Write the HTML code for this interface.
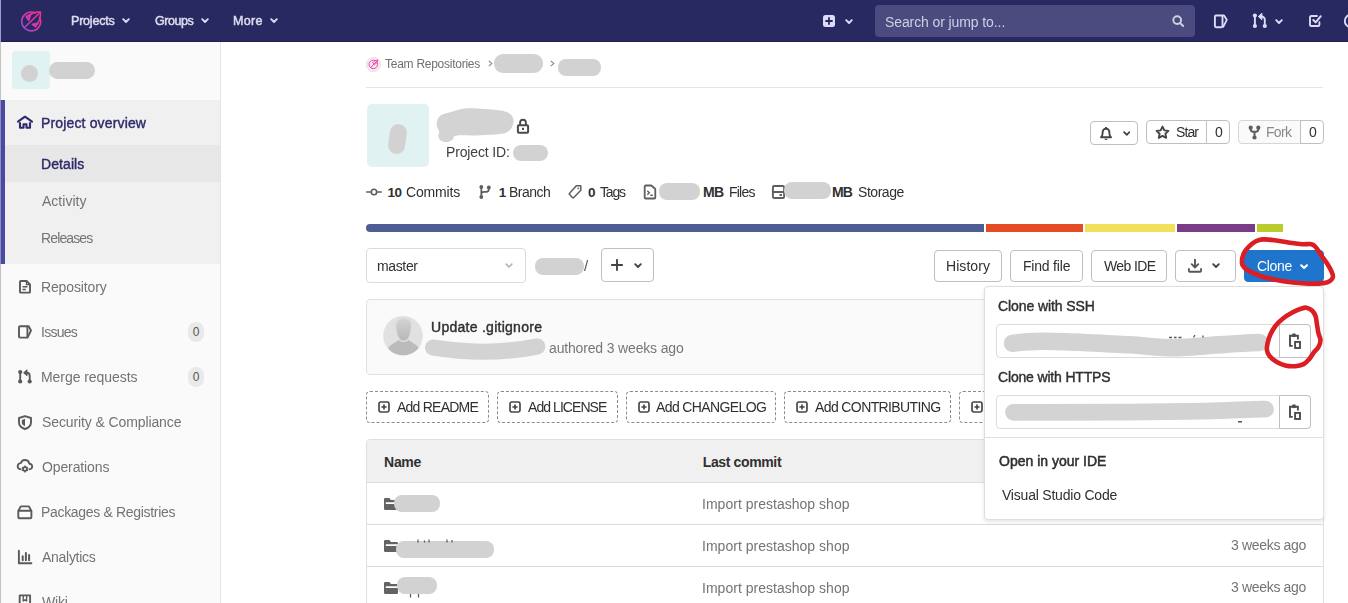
<!DOCTYPE html>
<html>
<head>
<meta charset="utf-8">
<title>Project</title>
<style>
*{box-sizing:border-box;margin:0;padding:0}
html,body{width:1348px;height:603px;overflow:hidden;background:#fff}
body{font-family:"Liberation Sans",sans-serif;font-size:14px;color:#303030;position:relative}
.abs{position:absolute}
.t{position:absolute;white-space:nowrap;line-height:20px;height:20px;will-change:transform}
.b{font-weight:400;-webkit-text-stroke:.42px currentColor}
.b7{font-weight:700;will-change:auto}
.bb{font-weight:700 !important;font-size:13.500px;-webkit-text-stroke:0 !important;will-change:auto}
.blob{position:absolute;background:#d2d2d2;border-radius:10px}
/* nav */
#nav{position:absolute;left:0;top:0;width:1348px;height:41px;background:#292961}
#nav .t{color:#dddcf0;font-weight:400;font-size:12.5px;-webkit-text-stroke:.5px #dddcf0}
#search{position:absolute;left:875px;top:5px;width:320px;height:32px;background:#4b4b80;border-radius:4px}
#search .t{font-weight:400;color:#cfcfe3;font-size:14px;-webkit-text-stroke:0}
/* sidebar */
#side{position:absolute;left:0;top:41px;width:221px;height:562px;background:#fafafa;border-right:1px solid #e5e5e5}
#side .t{color:#737373;font-size:14px}
.badge{position:absolute;left:188px;width:16px;height:20px;border-radius:8px;background:#e9e9e9;color:#555;font-size:12px;line-height:20px;text-align:center}
/* main */
.btn{position:absolute;height:34px;border:1px solid #d4d4d4;border-radius:4px;background:#fff}
.btn .t{top:6px;font-size:14px;color:#303030}
.hr{position:absolute;height:1px;background:#e5e5e5}
.dash{position:absolute;top:391px;height:32px;border:1px dashed #8c8c8c;border-radius:4px;background:#fff}
.dash .t{top:5px;left:29px;font-size:14px;color:#303030}
.dash svg{position:absolute;left:11px;top:9px;width:12px;height:12px}
.row .t{font-size:14px;color:#747474}
</style>
<style id="fit">
#n1{left:70.6px;top:11px;letter-spacing:-0.20px}
#n2{left:154.7px;top:11px;letter-spacing:-0.47px}
#n3{left:232.7px;top:11px;letter-spacing:0.32px}
#n4{left:9.6px;top:7px;letter-spacing:-0.10px}
#s0{left:40.7px;top:72px;letter-spacing:0.15px}
#s1{left:41.0px;top:113px;letter-spacing:0.08px}
#s2{left:41.5px;top:150px;letter-spacing:0.01px}
#s3{left:40.8px;top:187px;letter-spacing:-0.87px}
#s4{left:40.8px;top:236px;letter-spacing:-0.14px}
#s5{left:40.7px;top:281px;letter-spacing:-0.73px}
#s6{left:40.7px;top:326px;letter-spacing:-0.06px}
#s7{left:41.7px;top:371px;letter-spacing:-0.11px}
#s8{left:41.7px;top:416px;letter-spacing:-0.12px}
#s9{left:40.7px;top:461px;letter-spacing:-0.32px}
#s10{left:41.7px;top:506px;letter-spacing:-0.28px}
#s11{left:41.7px;top:551px;letter-spacing:-0.21px}
#m0{left:385.4px;top:54px;letter-spacing:-0.26px}
#m1{left:445.7px;top:142px;letter-spacing:-0.15px}
#m2{left:28.9px;top:1px;letter-spacing:-0.90px}
#m3{left:7.7px;top:1px;letter-spacing:0.00px}
#m4{left:27.3px;top:1px;letter-spacing:-0.70px}
#m5{left:7.9px;top:1px;letter-spacing:0.00px}
#m6{left:387.6px;top:183px;letter-spacing:-0.61px}
#m7{left:406.1px;top:182px;letter-spacing:-0.17px}
#m8{left:498.8px;top:183px;letter-spacing:0.00px}
#m9{left:509.0px;top:182px;letter-spacing:-0.49px}
#m10{left:587.9px;top:183px;letter-spacing:0.00px}
#m11{left:599.9px;top:182px;letter-spacing:-1.19px}
#m12{left:703.1px;top:182px;letter-spacing:-0.86px}
#m13{left:728.5px;top:182px;letter-spacing:-0.79px}
#m14{left:831.9px;top:182px;letter-spacing:-0.86px}
#m15{left:857.9px;top:182px;letter-spacing:-0.46px}
#m16{left:10.3px;top:7px;letter-spacing:-0.36px}
#m17{left:583.6px;top:256px;letter-spacing:0.00px}
#m18{left:11.1px;top:5px;letter-spacing:0.06px}
#m19{left:11.8px;top:5px;letter-spacing:-0.20px}
#m20{left:11.5px;top:5px;letter-spacing:-0.60px}
#m21{left:11.6px;top:5px;letter-spacing:-0.32px}
#m22{left:430.9px;top:317px;letter-spacing:0.27px}
#m23{left:549.2px;top:338px;letter-spacing:-0.16px}
#m24{left:30.1px;top:5px;letter-spacing:-0.77px}
#m25{left:30.2px;top:5px;letter-spacing:-0.94px}
#m26{left:29.3px;top:5px;letter-spacing:-0.61px}
#m27{left:30.4px;top:5px;letter-spacing:-0.61px}
#m28{left:384.1px;top:452px;letter-spacing:-0.31px}
#m29{left:702.7px;top:452px;letter-spacing:-0.36px}
#m30{left:701.7px;top:494px;letter-spacing:0.02px}
#m31{left:701.7px;top:536px;letter-spacing:0.02px}
#m32{left:701.7px;top:578px;letter-spacing:0.02px}
#m33{left:1230.9px;top:535px;letter-spacing:-0.33px}
#m34{left:1230.9px;top:577px;letter-spacing:-0.33px}
#d0{left:997.7px;top:296px;letter-spacing:-0.09px}
#d1{left:997.7px;top:367px;letter-spacing:-0.17px}
#d2{left:998.5px;top:451px;letter-spacing:0.00px}
#d3{left:1002.1px;top:485px;letter-spacing:-0.21px}
</style>
</head>
<body>

<!-- ================= NAV ================= -->
<div id="nav">
  <svg class="abs" style="left:18px;top:8px" width="26" height="26" viewBox="18 8 26 26" fill="none" stroke-linecap="round" stroke-linejoin="round">
    <defs><linearGradient id="lg" gradientUnits="userSpaceOnUse" x1="22" y1="30" x2="40" y2="12"><stop offset="0" stop-color="#8f4fe0"/><stop offset=".45" stop-color="#d63aa8"/><stop offset="1" stop-color="#f0308c"/></linearGradient></defs>
    <path d="M39.600 17.300A9.400 9.400 0 1 1 35.200 13" stroke="url(#lg)" stroke-width="1.600"/>
    <path d="M24.700 27.300 40.300 12.200" stroke="url(#lg)" stroke-width="1.500"/>
    <path d="M40.400 12.100c-4.200-.4-8 .6-10.600 2.800M40.400 12.100c.4 4.200-.7 8.400-3.200 11.700" stroke="url(#lg)" stroke-width="1.500"/>
    <path d="M30.600 14.400 26.300 16.500 28.600 20.200z" stroke="url(#lg)" stroke-width="1.700" fill="url(#lg)" fill-opacity=".55"/>
    <path d="M37.600 23.400 35.600 26.600 32.400 24.300z" stroke="url(#lg)" stroke-width="1.700" fill="url(#lg)" fill-opacity=".55"/>
  </svg>
  <span class="t" id="n1">Projects</span>
  <span class="t" id="n2">Groups</span>
  <span class="t" id="n3">More</span>
  <svg class="abs" style="left:122.2px;top:18px" width="8" height="5.4" viewBox="0 0 8 5.400"><path d="M1.200 1.200 4 4 6.800 1.200" fill="none" stroke="#dddbf6" stroke-width="1.9" stroke-linecap="round" stroke-linejoin="round"/></svg>
  <svg class="abs" style="left:201.4px;top:18px" width="8" height="5.4" viewBox="0 0 8 5.400"><path d="M1.200 1.200 4 4 6.800 1.200" fill="none" stroke="#dddbf6" stroke-width="1.9" stroke-linecap="round" stroke-linejoin="round"/></svg>
  <svg class="abs" style="left:270.1px;top:18px" width="8" height="5.4" viewBox="0 0 8 5.400"><path d="M1.200 1.200 4 4 6.800 1.200" fill="none" stroke="#dddbf6" stroke-width="1.9" stroke-linecap="round" stroke-linejoin="round"/></svg>

  <!-- plus -->
  <svg class="abs" style="left:822px;top:14px" width="14" height="14" viewBox="0 0 14 14"><rect x="1" y="1" width="12" height="12" rx="2.5" fill="#dddbf6"/><path d="M7 4v6M4 7h6" stroke="#292961" stroke-width="1.8" stroke-linecap="round"/></svg>
  <svg class="abs" style="left:845.2px;top:18.6px" width="8" height="5.4" viewBox="0 0 8 5.400"><path d="M1.200 1.200 4 4 6.800 1.200" fill="none" stroke="#dddbf6" stroke-width="1.9" stroke-linecap="round" stroke-linejoin="round"/></svg>

  <div id="search">
    <span class="t" id="n4">Search or jump to...</span>
    <svg class="abs" style="left:296px;top:9px" width="14" height="14" viewBox="0 0 14 14"><circle cx="6.200" cy="6.100" r="3.900" fill="none" stroke="#cfcfe3" stroke-width="1.900"/><path d="M9.300 9.200l2.800 2.800" stroke="#cfcfe3" stroke-width="2" stroke-linecap="round"/></svg>
  </div>

  <!-- issues -->
  <svg class="abs" style="left:1212px;top:13px" width="18" height="17" viewBox="1212 13 18 17" fill="none" stroke="#dddbf6" stroke-linejoin="round"><rect x="1214.900" y="15.500" width="7.600" height="11.700" rx="1.200" stroke-width="1.900"/><path d="M1222.500 15.500h1.500l2.800 4.300-3.600 7.100" stroke-width="1.800" stroke-linecap="round"/></svg>
  <!-- merge -->
  <svg class="abs" style="left:1251px;top:11px" width="18" height="19" viewBox="1251 11 18 19" fill="none" stroke="#dddbf6"><circle cx="1254.900" cy="15.600" r="2.100" fill="#dddbf6" stroke="none"/><circle cx="1254.900" cy="26" r="2.100" fill="#dddbf6" stroke="none"/><path d="M1254.900 16v10" stroke-width="1.900"/><circle cx="1264.800" cy="26" r="2.100" fill="#dddbf6" stroke="none"/><path d="M1264.800 26v-6.300a3.200 3.200 0 0 0-3.200-3.200h-1.600" stroke-width="1.900"/><path d="M1261.900 13.200 1258.300 16.500 1261.900 19.800z" fill="#dddbf6" stroke-width="1" stroke-linejoin="round"/></svg>
  <svg class="abs" style="left:1275.2px;top:18.6px" width="8" height="5.4" viewBox="0 0 8 5.400"><path d="M1.200 1.200 4 4 6.800 1.200" fill="none" stroke="#dddbf6" stroke-width="1.9" stroke-linecap="round" stroke-linejoin="round"/></svg>
  <!-- todo -->
  <svg class="abs" style="left:1308px;top:12px" width="16" height="17" viewBox="1308 12 16 17" fill="none" stroke="#dddbf6" stroke-linecap="round" stroke-linejoin="round"><path d="M1319.400 22.200v2.500a1.300 1.300 0 0 1-1.300 1.300h-6.800a1.300 1.300 0 0 1-1.300-1.300v-7.400a1.300 1.300 0 0 1 1.300-1.300h5.600" stroke-width="1.900"/><path d="M1313.300 20 1315.700 22.400 1320.800 16.200" stroke-width="2"/></svg>
  <!-- help (cut) -->
  <svg class="abs" style="left:1343px;top:13px" width="16" height="16" viewBox="0 0 16 16"><circle cx="8" cy="8" r="6.200" fill="none" stroke="#dddbf6" stroke-width="1.9"/></svg>
</div>
<div class="abs" style="left:0;top:41px;width:1348px;height:1px;background:#202050;z-index:5"></div>
<div class="abs" style="left:0;top:0;width:1px;height:603px;background:#c4c4c4;z-index:6"></div><div class="abs" style="left:0;top:0;width:1px;height:42px;background:#9e9dc9;z-index:7"></div><div class="abs" style="left:0;top:100px;width:1px;height:164px;background:#8f8dc4;z-index:7"></div>

<!-- ================= SIDEBAR ================= -->
<div id="side">
  <div class="abs" style="left:12px;top:10px;width:38px;height:38px;border-radius:4px;background:#e0f2f1"></div>
  <div class="blob" style="left:20.800px;top:23.600px;width:17.200px;height:17.600px;border-radius:9px"></div>
  <div class="blob" style="left:49.300px;top:21px;width:45.600px;height:17.400px"></div>

  <div class="abs" style="left:0;top:59px;width:220px;height:164px;background:#f0f0f0"></div>
  <div class="abs" style="left:1px;top:59px;width:4px;height:164px;background:#4b48a0"></div>
  <div class="abs" style="left:5px;top:104px;width:215px;height:37px;background:#e7e7e7"></div>
  <span class="t b" id="s0" style="color:#2f2a6b">Project overview</span>
  <span class="t b" id="s1" style="color:#2f2a6b">Details</span>
  <span class="t" id="s2">Activity</span>
  <span class="t" id="s3">Releases</span>

  <span class="t" id="s4">Repository</span>
  <span class="t" id="s5">Issues</span>
  <span class="t" id="s6">Merge requests</span>
  <span class="t" id="s7">Security &amp; Compliance</span>
  <span class="t" id="s8">Operations</span>
  <span class="t" id="s9">Packages &amp; Registries</span>
  <span class="t" id="s10">Analytics</span>
  <span class="t" id="s11">Wiki</span>
  <div class="badge" style="top:281px">0</div>
  <div class="badge" style="top:326px">0</div>

</div>


<!-- sidebar icon overlay (page coordinates) -->
<svg class="abs" style="left:0;top:0" width="221" height="603" viewBox="0 0 221 603" fill="none" stroke="#5a5a5a" stroke-width="1.900" stroke-linejoin="round">
  <g stroke="#2f2a6b" stroke-linecap="round" stroke-width="2.100"><path d="M18 121.700 25 116.700l7 5"/><path d="M20 122.300v5.400h3.500v-3.500h3v3.500H30v-5.400" stroke-linecap="butt"/></g>
  <path d="M20 281.700a.7.700 0 0 1 .7-.7h5.900l3.400 3.500v7.400a.7.700 0 0 1-.7.700h-8.600a.7.700 0 0 1-.7-.7z"/><path d="M22.500 286.700h5M22.500 289.600h3.300" stroke-width="1.500"/><path d="M26.400 281.200v3.500h3.400" stroke-width="1.200"/>
  <rect x="19" y="326.300" width="8.400" height="11.300" rx="1.100"/><path d="M27.400 326.300h1.300l2.300 4.200-3.500 7.100" stroke-linecap="round"/>
  <g><circle cx="20.200" cy="372.100" r="2.100" fill="#5a5a5a" stroke="none"/><circle cx="20.200" cy="381.500" r="2.100" fill="#5a5a5a" stroke="none"/><path d="M20.200 372.500v9"/><circle cx="29.700" cy="381.500" r="2.100" fill="#5a5a5a" stroke="none"/><path d="M29.700 381.500v-5.700a3 3 0 0 0-3-3h-1.500"/><path d="M27 369.800 23.600 372.800 27 375.800z" fill="#5a5a5a" stroke-width="1"/></g>
  <path d="M25 416.100 19 418v4.400c0 3.100 2.400 5.300 6 6.600 3.600-1.300 6-3.500 6-6.600V418z"/><path d="M25 418.800 21.800 419.900v2.600c0 1.700 1.300 2.900 3.200 3.700z" fill="#5a5a5a" stroke="none"/>
  <path d="M20.700 469.300a3.100 3.100 0 0 1 .2-6.200 4.300 4.300 0 0 1 8.400.6 2.800 2.800 0 0 1 .2 5.600" stroke-linecap="round"/><circle cx="25" cy="469" r="1.900" stroke-width="1.700"/><path d="M25 465.600v1.300M25 471.100v1.300M22.100 467.300l1.100.7M26.800 470l1.100.7M22.100 470.700l1.100-.7M26.800 468l1.100-.7" stroke-width="1.500"/>
  <path d="M18.300 510.800h13.100v6.400a1.100 1.100 0 0 1-1.100 1.100H19.400a1.100 1.100 0 0 1-1.100-1.100z"/><path d="M18.500 510.600l1.900-3.600a1.100 1.100 0 0 1 1-.6h6.900a1.100 1.100 0 0 1 1 .6l1.900 3.600"/>
  <path d="M18.900 550.800v12.500h12.500" stroke-linecap="round"/><path d="M22.700 560.300v-4M25.900 560.300v-7.400M29.100 560.300v-5.200" stroke-width="2" stroke-linecap="round"/>
  <path d="M19.700 604v-8.600h10.400v8.600"/><path d="M23.200 595.500v5.500l1.700-1.300 1.700 1.300v-5.500" stroke-width="1.400"/>
</svg>

<!-- ================= MAIN ================= -->
<div id="main">
  <!-- breadcrumb -->
  <svg class="abs" style="left:366px;top:57px" width="15" height="15" viewBox="0 0 15 15" fill="none" stroke-linecap="round" stroke-linejoin="round">
    <circle cx="7.5" cy="7.500" r="7" fill="#fbeaf4" stroke="#e6d3e2" stroke-width=".8"/>
    <path d="M11.300 5.600A4.300 4.300 0 1 1 9.300 3.500" stroke="#e0479e" stroke-width="1"/>
    <path d="M4.800 10.500 11.500 3.300" stroke="#e0479e" stroke-width="1"/>
    <path d="M11.600 3.200c-2.300.1-4 1.100-5 2.700l1.900 1.800c1.800-1 2.900-2.400 3.100-4.500z" stroke="#e0479e" stroke-width=".9"/>
  </svg>
  <span class="t" id="m0" style="font-size:12px;color:#707070">Team Repositories</span>
  <svg class="abs" style="left:488px;top:60px" width="5" height="7" viewBox="0 0 5 7"><path d="M.8.800 3.800 3.500.8 6.200" fill="none" stroke="#8a8a8a" stroke-width="1.100"/></svg>
  <svg class="abs" style="left:550px;top:60px" width="5" height="7" viewBox="0 0 5 7"><path d="M.8.800 3.800 3.500.8 6.200" fill="none" stroke="#8a8a8a" stroke-width="1.100"/></svg>
  <div class="blob" style="left:494px;top:54px;width:49px;height:19px;border-radius:9px"></div>
  <div class="blob" style="left:558px;top:59px;width:43px;height:17px;border-radius:8px"></div>
  <div class="hr" style="left:366px;top:87px;width:957px"></div>

  <!-- project header -->
  <div class="abs" style="left:366.700px;top:104.300px;width:62.400px;height:62.800px;border-radius:5px;background:#e0f2f1"></div>
  <div class="blob" style="left:389px;top:124px;width:17px;height:30px;border-radius:9px;transform:rotate(8deg)"></div>
  <svg class="abs" style="left:430px;top:104px" width="90" height="42" viewBox="430 104 90 42"><path d="M436.6 124.7C436.8 122.0 437.4 118.0 440.1 115.8C442.8 113.6 448.2 112.7 452.6 111.4C457.1 110.2 461.5 108.7 466.8 108.3C472.1 107.9 478.7 108.6 484.6 109.0C490.5 109.4 497.9 109.8 502.4 110.8C506.8 111.8 509.4 113.2 511.3 114.9C513.1 116.6 513.5 118.9 513.5 121.1C513.5 123.3 512.5 126.4 511.3 128.3C510.1 130.2 508.7 131.7 506.0 132.7C503.3 133.7 500.4 134.1 495.3 134.5C490.2 134.9 482.2 135.2 475.7 135.4C469.2 135.6 460.0 135.0 456.1 135.7C452.2 136.4 454.1 138.8 452.6 139.8C451.1 140.9 449.1 141.8 447.2 142.0C445.3 142.2 442.5 141.6 441.0 140.7C439.5 139.8 438.6 137.8 438.3 136.3C438.0 134.8 439.5 133.7 439.2 131.8C438.9 129.9 436.5 127.4 436.6 124.7Z" fill="#d3d3d4"/></svg>
  
  <svg class="abs" style="left:516px;top:118px" width="14" height="16" viewBox="0 0 14 16"><rect x="1.900" y="7.200" width="10.200" height="7.600" rx="1" fill="none" stroke="#4a4a4a" stroke-width="2"/><path d="M4.100 7V4.600a2.900 2.900 0 0 1 5.800 0V7" fill="none" stroke="#4a4a4a" stroke-width="1.900"/><rect x="6" y="9.800" width="2" height="2.200" fill="#4a4a4a"/></svg>
  <span class="t" id="m1" style="color:#404040">Project ID:</span>
  <div class="blob" style="left:513px;top:145px;width:35px;height:16px;border-radius:8px"></div>

  <!-- notification / star / fork -->
  <div class="btn" style="left:1090px;top:121px;width:48px;height:24px;border-color:#bfbfbf">
    <svg class="abs" style="left:8px;top:4px" width="14" height="15" viewBox="0 0 14 15"><path d="M2 11.200h10c-1.200-1-1.600-2.100-1.600-3.600V6.200a3.400 3.400 0 0 0-6.800 0v1.400C3.600 9.100 3.200 10.200 2 11.200z" fill="none" stroke="#454545" stroke-width="1.900" stroke-linejoin="round"/><path d="M5.300 12.800a1.800 1.800 0 0 0 3.400 0z" fill="#454545"/><path d="M7 1v1.800" stroke="#454545" stroke-width="1.900"/></svg>
    <svg class="abs" style="left:31.5px;top:9px" width="7.6" height="5.13" viewBox="0 0 8 5.400"><path d="M1.200 1.200 4 4 6.800 1.200" fill="none" stroke="#454545" stroke-width="1.9" stroke-linecap="round" stroke-linejoin="round"/></svg>
  </div>
  <div class="btn" style="left:1146px;top:120px;width:61px;height:24px;border-color:#bfbfbf;border-radius:4px 0 0 4px">
    <svg class="abs" style="left:8px;top:4px" width="15" height="15" viewBox="0 0 15 15"><path d="M7.500 1.600 9.300 5.400l4.100.5-3 2.900.8 4.100-3.700-2-3.700 2 .8-4.100-3-2.900 4.100-.5z" fill="none" stroke="#454545" stroke-width="1.900" stroke-linejoin="round"/></svg>
    <span class="t" id="m2">Star</span>
  </div>
  <div class="btn" style="left:1206px;top:120px;width:24px;height:24px;border-color:#bfbfbf;border-radius:0 4px 4px 0"><span class="t" id="m3">0</span></div>
  <div class="btn" style="left:1238px;top:120px;width:63px;height:24px;border-color:#d6d6d6;background:#fafafa;border-radius:4px 0 0 4px">
    <svg class="abs" style="left:9px;top:4px" width="14" height="15" viewBox="0 0 14 15"><circle cx="2.700" cy="2.700" r="2.100" fill="#5e5e5e"/><circle cx="10.300" cy="2.700" r="2.100" fill="#5e5e5e"/><circle cx="6.500" cy="12.500" r="2.100" fill="#5e5e5e"/><path d="M2.700 3.500v.8a2.400 2.400 0 0 0 2.400 2.400h2.800a2.400 2.400 0 0 0 2.400-2.400V3.500M6.500 6.700v5" fill="none" stroke="#5e5e5e" stroke-width="2"/></svg>
    <span class="t" id="m4" style="color:#8a8a8a">Fork</span>
  </div>
  <div class="btn" style="left:1300px;top:120px;width:24px;height:24px;border-color:#bfbfbf;border-radius:0 4px 4px 0"><span class="t" id="m5">0</span></div>

  <!-- stats -->
  <svg class="abs" style="left:366px;top:187px" width="16" height="10" viewBox="0 0 16 10"><circle cx="8" cy="5" r="2.700" fill="none" stroke="#5e5e5e" stroke-width="1.600"/><path d="M.8 5h4.400M10.800 5h4.400" stroke="#5e5e5e" stroke-width="1.600" stroke-linecap="round"/></svg>
  <span class="t bb" id="m6">10</span><span class="t" id="m7">Commits</span>
  <svg class="abs" style="left:478px;top:184px" width="14" height="16" viewBox="0 0 14 16"><circle cx="3.300" cy="3" r="1.900" fill="#5e5e5e"/><circle cx="3.300" cy="13" r="1.900" fill="#5e5e5e"/><circle cx="10.800" cy="3.500" r="1.900" fill="#5e5e5e"/><path d="M3.300 3v10M10.800 4v1.300a2.500 2.500 0 0 1-2.500 2.500H5.800a2.500 2.500 0 0 0-2.500 2.500" fill="none" stroke="#5e5e5e" stroke-width="1.700"/></svg>
  <span class="t bb" id="m8">1</span><span class="t" id="m9">Branch</span>
  <svg class="abs" style="left:568px;top:184px" width="15" height="16" viewBox="0 0 15 16"><path d="M8.300 1.700h4.500v4.500l-7 7.300a1 1 0 0 1-1.400 0L1.600 10.600a1 1 0 0 1 0-1.400z" fill="none" stroke="#5e5e5e" stroke-width="1.500" stroke-linejoin="round"/><circle cx="10.300" cy="4.300" r=".9" fill="#5e5e5e"/></svg>
  <span class="t bb" id="m10">0</span><span class="t" id="m11">Tags</span>
  <svg class="abs" style="left:643px;top:184px" width="14" height="16" viewBox="0 0 14 16"><path d="M1.700 2.500a1 1 0 0 1 1-1h5.600L12.300 5v8.500a1 1 0 0 1-1 1H2.700a1 1 0 0 1-1-1z" fill="none" stroke="#5e5e5e" stroke-width="1.800" stroke-linejoin="round"/><path d="M4.300 6.700 6.300 8.700 4.300 10.700M7.300 11.300h2.500" fill="none" stroke="#5e5e5e" stroke-width="1.400"/></svg>
  <div class="blob" style="left:659px;top:183px;width:41px;height:17px;border-radius:8px"></div>
  <span class="t bb" id="m12" style="font-size:14px">MB</span><span class="t" id="m13">Files</span>
  <svg class="abs" style="left:771px;top:184px" width="15" height="16" viewBox="0 0 15 16"><rect x="1.900" y="2" width="11.200" height="12" rx="1.300" fill="none" stroke="#5e5e5e" stroke-width="1.900"/><path d="M1.800 8h11.400M8.500 11h2.500" stroke="#5e5e5e" stroke-width="1.800"/></svg>
  <div class="blob" style="left:784px;top:182px;width:47px;height:17px;border-radius:8px"></div>
  <span class="t bb" id="m14" style="font-size:14px">MB</span><span class="t" id="m15">Storage</span>

  <!-- language bar -->
  <div class="abs" style="left:366px;top:224px;width:618px;height:8px;background:#4f5d95;border-radius:4px 0 0 4px"></div>
  <div class="abs" style="left:986px;top:224px;width:97px;height:8px;background:#e34c26"></div>
  <div class="abs" style="left:1085px;top:224px;width:90px;height:8px;background:#f1e05a"></div>
  <div class="abs" style="left:1177px;top:224px;width:78px;height:8px;background:#7b3b86"></div>
  <div class="abs" style="left:1257px;top:224px;width:26px;height:8px;background:#b9cc2c"></div>

  <!-- tree controls -->
  <div class="btn" style="left:366px;top:248px;width:160px;height:35px;border-color:#dbdbdb">
    <span class="t" id="m16">master</span>
    <svg class="abs" style="left:138.2px;top:14.2px" width="8" height="5.4" viewBox="0 0 8 5.400"><path d="M1.200 1.200 4 4 6.800 1.200" fill="none" stroke="#b5b5b5" stroke-width="1.700" stroke-linecap="round" stroke-linejoin="round"/></svg>
  </div>
  <div class="blob" style="left:535px;top:258px;width:49px;height:17px;border-radius:8px"></div>
  <span class="t" id="m17" style="color:#555;font-size:15px">/</span>
  <div class="btn" style="left:601px;top:248px;width:53px;height:34px;border-color:#bfbfbf">
    <svg class="abs" style="left:8.900px;top:10.300px" width="12" height="12" viewBox="0 0 12 12"><path d="M6 .9v10.200M.9 6h10.200" stroke="#454545" stroke-width="1.900" stroke-linecap="round"/></svg>
    <svg class="abs" style="left:32.100px;top:13.800px" width="8" height="5.4" viewBox="0 0 8 5.400"><path d="M1.200 1.200 4 4 6.800 1.200" fill="none" stroke="#454545" stroke-width="1.9" stroke-linecap="round" stroke-linejoin="round"/></svg>
  </div>
  <div class="btn" style="left:934px;top:250px;width:68px;height:32px;border-color:#bfbfbf"><span class="t" id="m18">History</span></div>
  <div class="btn" style="left:1010px;top:250px;width:73px;height:32px;border-color:#bfbfbf"><span class="t" id="m19">Find file</span></div>
  <div class="btn" style="left:1091px;top:250px;width:76px;height:32px;border-color:#bfbfbf"><span class="t" id="m20">Web IDE</span></div>
  <div class="btn" style="left:1175px;top:250px;width:61px;height:32px;border-color:#bfbfbf">
    <svg class="abs" style="left:11px;top:7.200px" width="16" height="16" viewBox="0 0 16 16"><path d="M8 1.600v7.600M4.700 6.200 8 9.500l3.300-3.300" fill="none" stroke="#585858" stroke-width="1.900" stroke-linecap="round" stroke-linejoin="round"/><path d="M1.900 10.300v2.500a1 1 0 0 0 1 1h10.200a1 1 0 0 0 1-1v-2.500" fill="none" stroke="#585858" stroke-width="1.900" stroke-linecap="butt"/></svg>
    <svg class="abs" style="left:35.800px;top:12.400px" width="8" height="5.400" viewBox="0 0 8 5.400"><path d="M1.200 1.200 4 4 6.800 1.200" fill="none" stroke="#454545" stroke-width="1.9" stroke-linecap="round" stroke-linejoin="round"/></svg>
  </div>
  <div class="btn" style="left:1244px;top:250px;width:80px;height:32px;border-color:#1f75cb;background:#1f75cb">
    <span class="t" id="m21" style="color:#fff">Clone</span>
    <svg class="abs" style="left:55px;top:12.6px" width="8.2" height="5.54" viewBox="0 0 8 5.400"><path d="M1.200 1.200 4 4 6.800 1.200" fill="none" stroke="#fff" stroke-width="2" stroke-linecap="round" stroke-linejoin="round"/></svg>
  </div>

  <!-- last commit box -->
  <div class="abs" style="left:366px;top:299px;width:958px;height:76px;border:1px solid #e2e2e2;border-radius:4px;background:#fafafa"></div>
  <svg class="abs" style="left:383px;top:316px" width="40" height="40" viewBox="0 0 40 40"><defs><clipPath id="cp"><circle cx="20" cy="19.800" r="19.800"/></clipPath><linearGradient id="hg" x1="0" y1="0" x2="0" y2="1"><stop offset="0" stop-color="#d3d3d3"/><stop offset="1" stop-color="#b7b7b7"/></linearGradient></defs><circle cx="20" cy="19.800" r="19.800" fill="#e1e1e1"/><g clip-path="url(#cp)"><path d="M5.200 32.500C7 28.300 12.500 26.600 15.800 24 18 26.800 23.200 26.800 25.400 24 28.700 26.600 34.200 28.300 36 32.500 33 37 27 39.300 20.600 39.300S8.200 37 5.200 32.500Z" fill="#bbbbbb"/><path d="M12.800 9.200C12.800 4.600 16 2.300 20.600 2.300S28.400 4.600 28.400 9.200C28.400 15 27 19.800 25.600 22.300 24.500 24.400 22.500 25.200 20.600 25.200S16.700 24.400 15.600 22.300C14.200 19.800 12.800 15 12.800 9.200Z" fill="url(#hg)" stroke="#dcdcdc" stroke-width="1.400"/></g></svg>
  <span class="t b" id="m22">Update .gitignore</span>
  <svg class="abs" style="left:420px;top:332px" width="135" height="34" viewBox="420 332 135 34" fill="none" stroke="#d3d3d4" stroke-linecap="round"><path d="M433 347.600Q487 356.400 537.300 346.500" stroke-width="16.200"/></svg>
  <span class="t" id="m23" style="color:#777">authored 3 weeks ago</span>

  <!-- add buttons -->
  <div class="dash" style="left:366px;width:123px"><svg width="13" height="13" viewBox="0 0 13 13"><rect x="1.100" y="1.100" width="10.800" height="10.800" rx="1.800" fill="none" stroke="#454545" stroke-width="1.800"/><path d="M6.500 3.700v5.600M3.700 6.500h5.600" stroke="#454545" stroke-width="1.800"/></svg><span class="t" id="m24">Add README</span></div>
  <div class="dash" style="left:497px;width:121px"><svg width="13" height="13" viewBox="0 0 13 13"><rect x="1.100" y="1.100" width="10.800" height="10.800" rx="1.800" fill="none" stroke="#454545" stroke-width="1.800"/><path d="M6.500 3.700v5.600M3.700 6.500h5.600" stroke="#454545" stroke-width="1.800"/></svg><span class="t" id="m25">Add LICENSE</span></div>
  <div class="dash" style="left:626px;width:150px"><svg width="13" height="13" viewBox="0 0 13 13"><rect x="1.100" y="1.100" width="10.800" height="10.800" rx="1.800" fill="none" stroke="#454545" stroke-width="1.800"/><path d="M6.500 3.700v5.600M3.700 6.500h5.600" stroke="#454545" stroke-width="1.800"/></svg><span class="t" id="m26">Add CHANGELOG</span></div>
  <div class="dash" style="left:784px;width:167px"><svg width="13" height="13" viewBox="0 0 13 13"><rect x="1.100" y="1.100" width="10.800" height="10.800" rx="1.800" fill="none" stroke="#454545" stroke-width="1.800"/><path d="M6.500 3.700v5.600M3.700 6.500h5.600" stroke="#454545" stroke-width="1.800"/></svg><span class="t" id="m27">Add CONTRIBUTING</span></div>
  <div class="dash" style="left:959px;width:140px"><svg width="13" height="13" viewBox="0 0 13 13"><rect x="1.100" y="1.100" width="10.800" height="10.800" rx="1.800" fill="none" stroke="#454545" stroke-width="1.800"/><path d="M6.500 3.700v5.600M3.700 6.500h5.600" stroke="#454545" stroke-width="1.800"/></svg></div>

  <!-- table -->
  <div class="abs" style="left:366px;top:439px;width:958px;height:181px;border:1px solid #e0e0e0;border-radius:4px 4px 0 0;background:#fff"></div>
  <div class="abs" style="left:367px;top:440px;width:956px;height:42px;background:#f0f0f0;border-radius:3px 3px 0 0"></div>
  <div class="hr" style="left:367px;top:482px;width:956px;background:#dcdcdc"></div>
  <div class="hr" style="left:367px;top:524px;width:956px;background:#dcdcdc"></div>
  <div class="hr" style="left:367px;top:566px;width:956px;background:#dcdcdc"></div>
  <span class="t b7" id="m28">Name</span>
  <span class="t b7" id="m29">Last commit</span>
  <div class="row">
    <span class="t" id="m30">Import prestashop shop</span>
    <span class="t" id="m31">Import prestashop shop</span>
    <span class="t" id="m32">Import prestashop shop</span>
    <span class="t" id="m33">3 weeks ago</span>
    <span class="t" id="m34">3 weeks ago</span>
  </div>
  <svg class="abs fold" style="left:384px;top:498px" width="14" height="12" viewBox="0 0 14 12"><path fill-rule="evenodd" d="M0 1.300A1.300 1.300 0 0 1 1.300 0h4.100l1.500 2.100h5.800A1.300 1.300 0 0 1 14 3.400v7.300A1.300 1.300 0 0 1 12.700 12H1.300A1.300 1.300 0 0 1 0 10.700zM1.800 4.200v1.800H14V4.200z" fill="#636363"/></svg>
  <svg class="abs fold" style="left:384px;top:540px" width="14" height="12" viewBox="0 0 14 12"><path fill-rule="evenodd" d="M0 1.300A1.300 1.300 0 0 1 1.300 0h4.100l1.500 2.100h5.800A1.300 1.300 0 0 1 14 3.400v7.300A1.300 1.300 0 0 1 12.700 12H1.300A1.300 1.300 0 0 1 0 10.700zM1.800 4.200v1.800H14V4.200z" fill="#636363"/></svg>
  <svg class="abs fold" style="left:384px;top:582px" width="14" height="12" viewBox="0 0 14 12"><path fill-rule="evenodd" d="M0 1.300A1.300 1.300 0 0 1 1.300 0h4.100l1.500 2.100h5.800A1.300 1.300 0 0 1 14 3.400v7.300A1.300 1.300 0 0 1 12.700 12H1.300A1.300 1.300 0 0 1 0 10.700zM1.800 4.200v1.800H14V4.200z" fill="#636363"/></svg>
  <div class="blob" style="left:394px;top:495px;width:46px;height:17px;border-radius:8px"></div>
  <div class="blob" style="left:396px;top:541px;width:98px;height:17px;border-radius:8px"></div>
  <div class="blob" style="left:397px;top:577px;width:40px;height:17px;border-radius:8px"></div>

  <svg class="abs" style="left:400px;top:538px" width="60" height="62" viewBox="400 538 60 62" stroke="#555" stroke-width="1.200"><path d="M418 539.500v3M424.500 540.500v2M429 539.500v3M447 539.500v3M452 540v2.500M410.500 594v3.500M418.500 594v3.500"/></svg>
  <!-- clone dropdown -->
  <div class="abs" id="dd" style="left:984px;top:286px;width:340px;height:234px;background:#fff;border:1px solid #dedede;border-radius:4px;box-shadow:0 2px 4px rgba(0,0,0,.1)"></div>
  <span class="t b" id="d0">Clone with SSH</span>
  <div class="abs" style="left:996px;top:324px;width:315px;height:34px;border:1px solid #dbdbdb;border-radius:4px;background:#fff"></div>
  <div class="abs" style="left:1279px;top:324px;width:32px;height:34px;border:1px solid #bfbfbf;border-radius:0 4px 4px 0;background:#fff"></div>
  
  <span class="t b" id="d1">Clone with HTTPS</span>
  <div class="abs" style="left:996px;top:395px;width:315px;height:34px;border:1px solid #dbdbdb;border-radius:4px;background:#fff"></div>
  <div class="abs" style="left:1279px;top:395px;width:32px;height:34px;border:1px solid #bfbfbf;border-radius:0 4px 4px 0;background:#fff"></div>
  <svg class="abs" style="left:995px;top:325px" width="285" height="105" viewBox="995 325 285 105" fill="none" stroke="#d3d3d4" stroke-linecap="round" stroke-linejoin="round"><path d="M1012.500 343.300C1030 340.800 1050 341 1066 341.800S1110 343.500 1130 344.800 1166 348.600 1182 347.600 1210 345.200 1224 344.400 1250 342.600 1259.500 342.500" stroke-width="17.500"/><path d="M1013.500 412.300C1060 412.600 1130 412.200 1188 411.400S1250 408.800 1265.500 409.200" stroke-width="16.800"/><path d="M1169 337.500h3m2 0h2.500m2 0h3m12 0 1.500-2.500m8 .5v2" stroke="#555" stroke-width="1.300" stroke-linecap="butt"/><path d="M1238 421.800h4" stroke="#555" stroke-width="1.500" stroke-linecap="butt"/></svg>
  <svg class="abs" style="left:1280px;top:320px" width="40" height="115" viewBox="1280 320 40 115" fill="none" stroke="#4c4c4c" stroke-width="1.900"><g transform="translate(0,-71)"><path d="M1292.700 416.900H1290V406.700h7.900v3.900" /><circle cx="1293.950" cy="406.200" r="1.300" stroke-width="1.500"/><rect x="1295.100" y="412.900" width="4.900" height="6.100"/></g><g transform="translate(0,0)"><path d="M1292.700 416.900H1290V406.700h7.900v3.900" /><circle cx="1293.950" cy="406.200" r="1.300" stroke-width="1.500"/><rect x="1295.100" y="412.900" width="4.900" height="6.100"/></g></svg>
  <div class="hr" style="left:985px;top:437px;width:338px;background:#e0e0e0"></div>
  <span class="t b" id="d2" style="-webkit-text-stroke-width:.52px">Open in your IDE</span>
  <span class="t" id="d3">Visual Studio Code</span>

  <!-- red annotations -->
  <svg class="abs" style="left:1230px;top:230px" width="118" height="150" viewBox="0 0 118 150" fill="none" stroke="#da1e24" stroke-width="4.600" stroke-linecap="round" stroke-linejoin="round">
    <path d="M11.9 32.8C11.8 30.5 12.5 26.2 13.7 23.5C14.9 20.8 16.9 18.6 18.9 16.6C20.9 14.6 23.6 12.5 25.9 11.3C28.2 10.1 29.7 9.6 32.8 9.4C35.9 9.2 40.2 9.7 44.4 10.2C48.7 10.7 53.7 11.8 58.3 12.5C62.9 13.2 68.4 13.9 72.3 14.2C76.2 14.5 79.3 13.6 81.6 14.2C83.9 14.8 84.7 15.9 86.2 17.7C87.7 19.4 89.1 22.2 90.8 24.7C92.5 27.2 94.8 30.1 96.6 32.8C98.3 35.5 100.2 38.6 101.3 40.9C102.4 43.2 103.2 45.0 103.0 46.7C102.8 48.4 101.7 49.7 100.1 50.8C98.5 51.9 96.7 52.6 93.2 53.1C89.7 53.6 84.2 53.8 79.2 53.7C74.2 53.6 68.2 53.1 63.0 52.5C57.8 51.9 52.9 51.2 47.9 50.2C42.9 49.2 37.2 48.0 32.8 46.7C28.3 45.4 24.3 43.6 21.2 42.1C18.1 40.6 15.8 39.1 14.2 37.5C12.7 35.9 12.0 35.1 11.9 32.8Z"/>
    <path d="M76.4 77.7C78.3 78.0 80.5 79.1 82.0 80.5C83.5 81.9 84.8 83.8 85.6 86.2C86.4 88.6 86.5 91.8 87.0 94.6C87.5 97.4 87.8 100.5 88.4 103.1C89.0 105.7 90.5 107.8 90.5 110.1C90.5 112.5 89.6 115.1 88.4 117.2C87.2 119.3 85.0 120.8 83.5 122.8C82.0 124.8 80.9 127.3 79.2 129.2C77.5 131.1 75.9 132.9 73.6 134.1C71.2 135.3 68.1 136.0 65.1 136.2C62.0 136.4 58.3 136.2 55.3 135.5C52.2 134.8 49.4 133.5 46.8 132.0C44.2 130.5 41.3 128.3 39.7 126.3C38.1 124.3 37.2 122.2 36.9 120.0C36.6 117.8 37.0 115.5 37.6 112.9C38.2 110.3 39.1 107.3 40.4 104.5C41.7 101.7 43.4 98.6 45.4 96.0C47.4 93.4 49.6 91.2 52.4 89.0C55.2 86.8 59.2 84.3 62.3 82.6C65.4 80.9 68.4 79.6 70.8 78.8C73.2 78.0 74.5 77.4 76.4 77.7Z"/>
  </svg>
</div>

</body>
</html>
